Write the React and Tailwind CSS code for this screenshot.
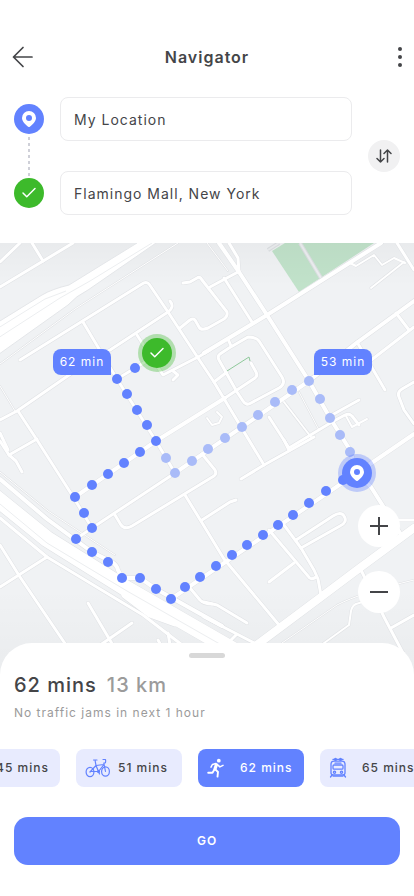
import { Car, Check } from 'lucide-react';

const MAP_WIDTH = 414;
const MAP_HEIGHT = 432;

// [stroke width, path]
const roads = [
    [1, 'M0 121L75 66L178 0'],
    [1, 'M0 143L15 168'],
    [1, 'M207 0L228 28'],
    [1, 'M299 149L319 187'],
    [1, 'M0 229L48 268L115 312'],
    [3, 'M0 44L73 0'],
    [3, 'M32 0L43 18'],
    [3, 'M0 19L20 0'],
    [3, 'M20 117L142 41Q146 38 149 41L168 69L198 115L214 139L229 164L264 222'],
    [3, 'M83 79L117 136L156 198L175 230'],
    [3, 'M0 177L17 168L72 130L110 107L168 69Q175 64 170 58'],
    [3, 'M183 40L190 39L197 35Q200 33 202 37L227 69Q228 73 224 76L208 85Q201 88 199 84L195 77Q193 75 190 77L180 85'],
    [3, 'M117 136L145 119'],
    [3, 'M137 92L163 132L200 113L210 107'],
    [3, 'M173 128L178 132L173 137'],
    [4, 'M204 110L267 72L381 0'],
    [3, 'M18 168L37 197L72 252L92 285L76 296'],
    [3, 'M37 196L9 212'],
    [3, 'M0 198L9 212L16 218L22 229'],
    [3, 'M0 190L8 207'],
    [4, 'M75 254L156 198L225 155'],
    [3, 'M225 155L255 135Q258 133 256 129L251 120'],
    [4, 'M175 230L309 138L355 101L414 58'],
    [3, 'M370 118L414 84'],
    [3, 'M396 70L409 87'],
    [3, 'M357 99L385 147'],
    [3, 'M397 0L414 27'],
    [2, 'M404 19L371 45'],
    [2, 'M350 20L356 23L374 12L382 22L394 15L405 20'],
    [4, 'M219 0L239 29L267 72L309 138L330 175L350 207L357 230L371 244L400 290'],
    [3, 'M229 0L238 15L239 29'],
    [3, 'M210 44L238 29'],
    [3, 'M224 35L252 79'],
    [3, 'M229 105L220 111Q217 113 219 117L237 149L243 158Q246 163 251 160L279 145Q286 141 282 134L259 98Q256 94 248 94Z'],
    [3, 'M228 96L231 103'],
    [3, 'M214 139L227 129'],
    [2, 'M207 175L212 182L219 180L222 174L217 169'],
    [3, 'M269 174L289 205L332 179'],
    [2, 'M284 159L311 194'],
    [3, 'M332 172L359 157'],
    [3, 'M332 179L345 172Q349 170 352 173L359 182'],
    [2, 'M346 173L352 184L367 176'],
    [3, 'M414 139L402 146Q397 149 399 154L404 167L414 181'],
    [4, 'M171 356L357 230L414 191'],
    [3, 'M241 236L264 222L314 194'],
    [3, 'M284 197L289 207'],
    [3, 'M202 211L215 227Q217 231 214 233L132 283Q125 287 121 282L115 272'],
    [3, 'M92 285L175 230'],
    [3, 'M185 252L204 283L224 316L279 382'],
    [3, 'M202 277L230 259L236 257'],
    [3, 'M269 287L308 333Q311 338 316 334'],
    [3, 'M284 282L301 305L314 327L318 336L321 352'],
    [3, 'M296 297L333 273Q341 268 344 273Q348 279 340 283L301 305'],
    [3, 'M269 339L294 320'],
    [3, 'M396 277L414 277'],
    [3, 'M361 327L384 374L404 412'],
    [3, 'M391 385L414 372'],
    [2, 'M366 358L356 361Q352 363 351 368L349 382L320 403'],
    [1, 'M282 400L337 362Q360 350 414 337'],
    [3, 'M204 359L217 362L247 380'],
    [3, 'M204 374L262 404'],
    [3, 'M227 401L236 392'],
    [8, 'M250 407L321 354L361 324L414 285'],
    [4, 'M0 236L47 276L92 309L112 319Q117 322 118 327L122 335'],
    [4, 'M122 335L140 335L156 346L222 383'],
    [3, 'M0 275L47 314L143 372L190 408'],
    [3, 'M0 302L20 334L68 405'],
    [3, 'M0 344L47 314'],
    [3, 'M88 360L114 404'],
    [3, 'M96 405L132 380'],
    [3, 'M168 390L171 408'],
    [3, 'M158 397L164 408'],
    [3, 'M190 345L200 357Q204 361 212 361'],
    [16, 'M-5 254L47 296L127 346L240 411'],
    [7, 'M125 352L150 371L175 380'],
];

const mainRoute = [
    [135, 125], [117, 136], [127, 151], [137, 167], [147, 182], [156, 198], [140, 209], [124, 220],
    [108, 231], [92, 242], [75, 254], [84, 270], [92, 285], [76, 296], [92, 309], [108, 319],
    [122, 335], [140, 335], [156, 346], [171, 356], [185, 344], [200, 334], [216, 323], [232, 312],
    [247, 302], [263, 292], [278, 282], [293, 272], [309, 260], [326, 248], [343, 237],
];

const altRoute = [
    [166, 215], [175, 230], [192, 218], [208, 206], [225, 195], [242, 184], [258, 172],
    [275, 159], [292, 147], [309, 138], [320, 156], [330, 175], [340, 192], [350, 209],
];

const PinIcon = () => (
    <svg viewBox="0 0 14 16" className="h-4 w-[14px]" aria-hidden="true">
        <path
            fill="white"
            fillRule="evenodd"
            d="M7 0a7 7 0 0 1 7 7c0 3.500-3.600 6.800-6.200 8.700a1.400 1.400 0 0 1-1.600 0C3.600 13.800 0 10.500 0 7a7 7 0 0 1 7-7Zm0 3.900a3 3 0 1 0 0 6 3 3 0 0 0 0-6Z"
        />
    </svg>
);

const CheckIcon = () => <Check className="h-[18px] w-[18px] text-white" strokeWidth={2} aria-hidden="true" />;

const BikeIcon = () => (
    <svg viewBox="0 0 26 20" className="h-5 w-[26px]" fill="none" stroke="#6282ff" strokeWidth="1.2" strokeLinecap="round" strokeLinejoin="round" aria-hidden="true">
        <ellipse cx="5" cy="14" rx="3.9" ry="4.7" />
        <ellipse cx="20.5" cy="13.5" rx="3.9" ry="4.7" />
        <path d="M5 14L11 7.5L19 6.5L13.5 13.5H5M11 7.5L13.5 13.5M11 7.5L10 2M8.500 2H12M20.5 13.5L18.8 5H20Q21 4.500 20.5 1.500H18M13.5 13.5L14.5 16" />
        <circle cx="13.5" cy="13.5" r="1" />
    </svg>
);

const RunIcon = () => (
    <svg viewBox="0 0 17 20" className="h-5 w-[17px]" fill="none" stroke="white" strokeLinecap="round" strokeLinejoin="round" aria-hidden="true">
        <circle cx="11.8" cy="2.7" r="1.9" fill="white" stroke="none" />
        <path strokeWidth="3.2" d="M9.4 6.8L8 11" />
        <path strokeWidth="1.5" d="M9 5.6L5.400 6.500L4 9.2M10.4 6.600L12.900 8.900L16 7.400" />
        <path strokeWidth="1.9" d="M8.300 11.400L11 14L10.5 18.600M7.400 11.600L5.500 14.700H1.200" />
    </svg>
);

const TrainIcon = () => (
    <svg viewBox="0 0 18 22" className="h-[22px] w-[18px]" fill="none" stroke="#6282ff" strokeWidth="1.3" strokeLinecap="round" strokeLinejoin="round" aria-hidden="true">
        <path d="M4 2.400H14" />
        <circle cx="6.5" cy="2.4" r="0.9" />
        <circle cx="11.5" cy="2.4" r="0.9" />
        <path d="M5 4.200H13Q15.800 4.200 16 7V16Q16 17.800 14 17.800H4Q2 17.800 2 16V7Q2.200 4.200 5 4.200Z" />
        <path d="M6 6.200H12" />
        <rect x="4" y="8" width="10" height="4.2" rx="1" />
        <circle cx="5.5" cy="15.2" r="1.1" />
        <circle cx="12.5" cy="15.2" r="1.1" />
        <path d="M3 18L1.500 20M15 18L16.500 20M4 19H14" />
    </svg>
);

const modes = [
    { id: 'car', time: '45 mins', icon: <Car className="h-5 w-5 text-[#6282ff]" strokeWidth={1} /> },
    { id: 'bike', time: '51 mins', icon: <BikeIcon /> },
    { id: 'run', time: '62 mins', icon: <RunIcon />, active: true },
    { id: 'train', time: '65 mins', icon: <TrainIcon /> },
];

// Puts its children at a point of the map
const MapPoint = ({ x, y, className, children }) => (
    <div
        className={`absolute ${className}`}
        style={{ left: `${(x / MAP_WIDTH) * 100}%`, top: `${(y / MAP_HEIGHT) * 100}%` }}
    >
        {children}
    </div>
);

const CityMap = () => (
    <svg viewBox={`0 0 ${MAP_WIDTH} ${MAP_HEIGHT}`} className="block h-auto w-full" role="img" aria-label="Route map">
        <defs>
            <linearGradient id="shade" x1="0" y1="0" x2="0" y2="1">
                <stop offset="0" stopColor="#000" stopOpacity="0.03" />
                <stop offset="0.1" stopColor="#000" stopOpacity="0" />
                <stop offset="0.8" stopColor="#000" stopOpacity="0" />
                <stop offset="0.95" stopColor="#000" stopOpacity="0.02" />
            </linearGradient>
        </defs>
        <rect width="414" height="432" fill="#f0f2f4" />
        <path d="M272 8L285 0H374L299 49Z" fill="#c1e2ca" />
        <path d="M300 0L321 35M268 7L279 0" stroke="#dcdfe2" strokeWidth="4" />
        <path d="M300 0L321 35M268 7L279 0" stroke="#eceef0" strokeWidth="2" />
        <rect width="414" height="432" fill="url(#shade)" />
        <g fill="none" stroke="#dfe1e4" strokeLinecap="round" strokeLinejoin="round">
            {roads.map(([width, d]) => (
                <path key={d} d={d} strokeWidth={width + 1} />
            ))}
        </g>
        <g fill="none" stroke="#fff" strokeLinecap="round" strokeLinejoin="round">
            {roads.map(([width, d]) => (
                <path key={d} d={d} strokeWidth={width} />
            ))}
        </g>
        {/* Highways */}
        <path d="M-5 81L42 52Q52 46 69 42L137 0L142 -5H164L156 0L88 47Q76 53 68 62L-5 114Z" fill="#fff" stroke="#e4e6e9" />
        <path d="M-5 97L60 55L90 38L152 0M-5 87L45 56L66 48" fill="none" stroke="#eceef0" />
        <path d="M0 261L47 300L127 348L225 404" fill="none" stroke="#eceef0" />
        <path d="M227 128L249 114L250 118" fill="none" stroke="#8fc99b" />
        <g fill="#a9bbf8">
            {altRoute.map(([x, y]) => (
                <circle key={`${x}-${y}`} cx={x} cy={y} r="5" />
            ))}
        </g>
        <g fill="#6282ff">
            {mainRoute.map(([x, y]) => (
                <circle key={`${x}-${y}`} cx={x} cy={y} r="5" />
            ))}
        </g>
    </svg>
);

const App = () => {
    return (
        <main className="min-h-screen bg-white font-['Inter',sans-serif] tracking-[1px] text-[#444548]">
            <header className="flex h-[69px] items-end justify-between px-3">
                <button type="button" aria-label="Back" className="flex h-6 w-6 items-center">
                    <svg viewBox="0 0 22 22" className="h-[22px] w-[22px]" fill="none" stroke="currentColor" strokeWidth="1.7" strokeLinecap="round" strokeLinejoin="round">
                        <path d="M20 11H1.500M11 1.500L1.500 11L11 20.5" />
                    </svg>
                </button>
                <h1 className="text-base leading-6 font-semibold">Navigator</h1>
                <button type="button" aria-label="More options" className="flex h-6 w-6 flex-col items-end justify-center gap-1">
                    <span className="h-1 w-1 rounded-full bg-[#444548]" />
                    <span className="h-1 w-1 rounded-full bg-[#444548]" />
                    <span className="h-1 w-1 rounded-full bg-[#444548]" />
                </button>
            </header>

            <form className="flex items-center gap-4 px-[14px] py-7" onSubmit={(e) => e.preventDefault()}>
                <div className="flex flex-col items-center self-stretch py-[7px]">
                    <span className="flex h-[30px] w-[30px] items-center justify-center rounded-full bg-[#6282ff]">
                        <PinIcon />
                    </span>
                    <span className="w-[2px] flex-1 bg-[repeating-linear-gradient(to_bottom,transparent_0_3px,#cfd0d8_3px_6px)]" />
                    <span className="flex h-[30px] w-[30px] items-center justify-center rounded-full bg-[#3dba2b]">
                        <CheckIcon />
                    </span>
                </div>
                <div className="flex min-w-0 flex-1 flex-col gap-[30px]">
                    <input
                        type="text"
                        aria-label="From"
                        defaultValue="My Location"
                        className="h-11 w-full rounded-lg border border-[#ebebed] px-[13px] text-sm outline-none"
                    />
                    <input
                        type="text"
                        aria-label="To"
                        defaultValue="Flamingo Mall, New York"
                        className="h-11 w-full rounded-lg border border-[#ebebed] px-[13px] text-sm outline-none"
                    />
                </div>
                <button type="button" aria-label="Swap locations" className="flex h-8 w-8 items-center justify-center rounded-full bg-[#f1f1f2]">
                    <svg viewBox="0 0 16 14" className="h-[14px] w-4" fill="none" stroke="currentColor" strokeWidth="1.5" strokeLinecap="round" strokeLinejoin="round">
                        <path d="M4.500 1V13M1 9.500L4.500 13L8 9.500M11.5 13V1M8 4.500L11.5 1L15 4.500" />
                    </svg>
                </button>
            </form>

            <section className="relative">
                <CityMap />
                <MapPoint x={53} y={106} className="flex h-[26px] w-[58px] items-center justify-center rounded-lg rounded-br-none bg-[#6282ff] text-xs whitespace-nowrap text-white">
                    62 min
                </MapPoint>
                <MapPoint x={314} y={106} className="flex h-[26px] w-[58px] items-center justify-center rounded-lg rounded-bl-none bg-[#6282ff] text-xs whitespace-nowrap text-white">
                    53 min
                </MapPoint>
                <MapPoint x={157} y={110} className="-translate-1/2 rounded-full bg-[#3dba2b]/35 p-1">
                    <span className="flex h-[30px] w-[30px] items-center justify-center rounded-full bg-[#3dba2b]">
                        <CheckIcon />
                    </span>
                </MapPoint>
                <MapPoint x={357} y={230} className="-translate-1/2 rounded-full bg-[#6282ff]/35 p-1">
                    <span className="flex h-[30px] w-[30px] items-center justify-center rounded-full bg-[#6282ff]">
                        <PinIcon />
                    </span>
                </MapPoint>
                <div className="absolute right-[14px] bottom-[62px] flex flex-col gap-6">
                    <button type="button" aria-label="Zoom in" className="flex h-[42px] w-[42px] items-center justify-center rounded-full bg-white">
                        <svg viewBox="0 0 18 18" className="h-[18px] w-[18px]" stroke="currentColor" strokeWidth="2">
                            <path d="M9 0V18M0 9H18" />
                        </svg>
                    </button>
                    <button type="button" aria-label="Zoom out" className="flex h-[42px] w-[42px] items-center justify-center rounded-full bg-white">
                        <svg viewBox="0 0 18 18" className="h-[18px] w-[18px]" stroke="currentColor" strokeWidth="2">
                            <path d="M0 9H18" />
                        </svg>
                    </button>
                </div>
            </section>

            {/* Bottom sheet */}
            <section className="relative -mt-8 overflow-hidden rounded-t-[32px] bg-white pt-[10px] pb-[31px]">
                <div className="mx-auto h-[5px] w-9 rounded-full bg-[#d8d8d8]" />
                <div className="px-[14px] pt-[13px]">
                    <h2 className="flex gap-[10px] text-xl leading-7 font-medium">
                        62 mins <span className="text-[#9b9b9b]">13 km</span>
                    </h2>
                    <p className="mt-1 text-xs leading-5 text-[#9b9b9b]">No traffic jams in next 1 hour</p>
                </div>
                <div className="mt-[26px] -ml-[46px] flex gap-4">
                    {modes.map(({ id, time, icon, active }) => (
                        <button
                            key={id}
                            type="button"
                            aria-pressed={Boolean(active)}
                            className={`flex h-[38px] w-[106px] shrink-0 items-center rounded-lg pl-[9px] text-xs font-medium whitespace-nowrap ${
                                active ? 'bg-[#6282ff] text-white' : 'bg-[#e8ebfe]'
                            }`}
                        >
                            <span className="w-[33px]">{icon}</span>
                            {time}
                        </button>
                    ))}
                </div>
                <div className="px-[14px] pt-[30px]">
                    <button type="button" className="h-12 w-full rounded-[14px] bg-[#6282ff] text-xs font-semibold text-white">
                        GO
                    </button>
                </div>
            </section>
        </main>
    );
};

export default App;
